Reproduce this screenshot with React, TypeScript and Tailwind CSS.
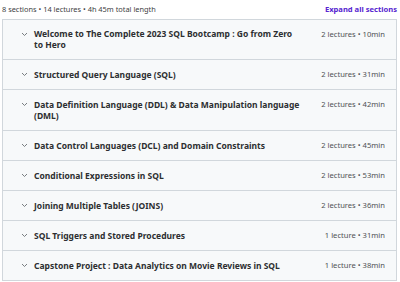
import React from "react";

const sections: { t: React.ReactNode; m: string }[] = [
  { t: <>Welcome to The Complete 2023 SQL Bootcamp : Go from Zero<br />to Hero</>, m: "2 lectures • 10min" },
  { t: "Structured Query Language (SQL)", m: "2 lectures • 31min" },
  { t: "Data Definition Language (DDL) & Data Manipulation language (DML)", m: "2 lectures • 42min" },
  { t: "Data Control Languages (DCL) and Domain Constraints", m: "2 lectures • 45min" },
  { t: "Conditional Expressions in SQL", m: "2 lectures • 53min" },
  { t: "Joining Multiple Tables (JOINS)", m: "2 lectures • 36min" },
  { t: "SQL Triggers and Stored Procedures", m: "1 lecture • 31min" },
  { t: "Capstone Project : Data Analytics on Movie Reviews in SQL", m: "1 lecture • 38min" },
];

function Chevron() {
  return (
    <svg width="7" height="5" viewBox="0 0 7 5" className="mt-[3px] shrink-0">
      <path d="M1 1 L3.5 3.5 L6 1" fill="none" stroke="#6a6f73" strokeWidth="0.9" />
    </svg>
  );
}

export default function App() {
  return (
    <div className="w-[400px] h-[282px] bg-white pl-[2px] pr-[3px] pt-[2px]" style={{ fontFamily: '"Noto Sans", "Liberation Sans", sans-serif' }}>
      <div className="flex items-center justify-between h-[15px] mb-[2px]">
        <span className="text-[7.4px] text-[#3e4143]">8 sections • 14 lectures • 4h 45m total length</span>
        <span className="text-[7.6px] font-bold text-[#5624d0]">Expand all sections</span>
      </div>
      <div className="border border-[#d1d7dc]">
        {sections.map((s, i) => (
          <div key={i} className={`flex items-start bg-[#f7f9fa] pl-[18px] pr-[11px] py-[9px] ${i > 0 ? "border-t border-[#d1d7dc]" : ""}`}>
            <Chevron />
            <div className={`ml-[6px] flex-1 text-[8.5px] font-bold text-[#2d2f31] pr-4 ${i === 0 ? "leading-[10.5px]" : "leading-[11px]"}`}>{s.t}</div>
            <div className="text-[7.6px] leading-[11px] text-[#4f5254] whitespace-nowrap">{s.m}</div>
          </div>
        ))}
      </div>
    </div>
  );
}
